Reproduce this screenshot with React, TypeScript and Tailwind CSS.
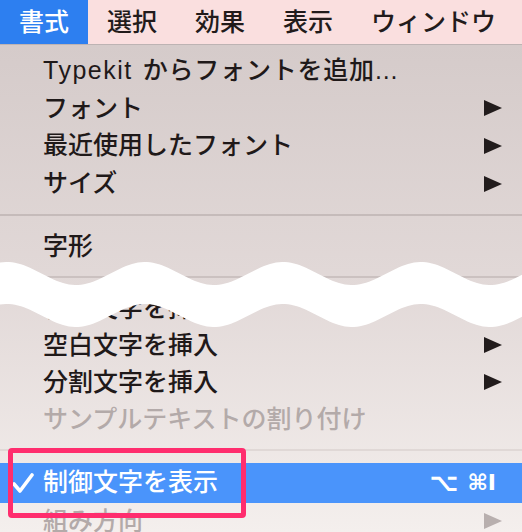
import React from 'react';

const font = { fontFamily: '"Liberation Sans", "Noto Sans CJK JP", sans-serif' };

function Arrow({ dim }: { dim?: boolean }) {
  return (
    <svg width="18" height="16" viewBox="0 0 18 16" className="shrink-0">
      <polygon points="0,0 18,8 0,16" fill={dim ? '#b8afae' : '#221c1c'} />
    </svg>
  );
}

function Row({
  label,
  arrow,
  dim,
  h = 'h-[37.6px]',
}: {
  label: React.ReactNode;
  arrow?: boolean;
  dim?: boolean;
  h?: string;
}) {
  return (
    <div className={`${h} flex items-center justify-between pl-[43px] pr-[20px]`}>
      <span className={`text-[25px] font-medium leading-none ${dim ? 'text-[#b3aaa9]' : 'text-[#1f1919]'}`}>{label}</span>
      {arrow && <Arrow dim={dim} />}
    </div>
  );
}

function Separator({ line }: { line: string }) {
  return (
    <div className="h-[25px] flex items-center">
      <div className={`h-[2px] w-full ${line}`} />
    </div>
  );
}

// white torn-paper wave laid over the menu
function Wave() {
  const top: string[] = [];
  const bottom: string[] = [];
  for (let x = 0; x <= 522; x += 3) {
    const y = 273.5 - 11.5 * Math.cos((2 * Math.PI * (x - 145)) / 138);
    top.push(`${x},${y.toFixed(2)}`);
    bottom.unshift(`${x},${(y + 42).toFixed(2)}`);
  }
  return (
    <svg className="absolute left-0 top-0 pointer-events-none" width="522" height="532" viewBox="0 0 522 532">
      <polygon points={[...top, ...bottom].join(' ')} fill="#ffffff" />
    </svg>
  );
}

export default function App() {
  const bar = ['選択', '効果', '表示', 'ウィンドウ'];
  return (
    <div className="relative w-[522px] h-[532px] overflow-hidden" style={font}>
      {/* menu bar */}
      <div className="h-[45px] flex bg-[#fadfdf] border-b border-[#bdb3b3]">
        <div className="px-[19px] flex items-center bg-[#2d7ff0] text-white text-[25px] font-medium leading-none">書式</div>
        {bar.map((b) => (
          <div key={b} className="px-[19px] flex items-center text-[#221b1b] text-[25px] font-medium leading-none">
            {b}
          </div>
        ))}
      </div>

      {/* dropdown */}
      <div className="h-[487px] pt-[7px] bg-linear-to-b from-[#d5cbca] via-[#e2d9d8] to-[#f4efed]">
        <Row
          label={
            <>
              <span className="tracking-[1.5px]">Typekit</span>
              <span className="ml-[10px] tracking-[0.8px]">からフォントを追加...</span>
            </>
          }
        />
        <Row label="フォント" arrow />
        <Row label="最近使用したフォント" arrow />
        <Row label="サイズ" arrow />
        <Separator line="bg-[#c5bbba]" />
        <Row label="字形" />
        <Separator line="bg-[#cbc1c0]" />
        <Row label="特殊文字を挿入" arrow h="h-[37px]" />
        <Row label="空白文字を挿入" arrow h="h-[37px]" />
        <Row label="分割文字を挿入" arrow h="h-[37px]" />
        <Row label="サンプルテキストの割り付け" dim h="h-[37px]" />
        <Separator line="bg-[#e0d8d6]" />
        <div className="h-[40px] flex items-center justify-between bg-[#4a94fb] pl-[12px] pr-[26px] text-white">
          <div className="flex items-center">
            <svg width="22" height="20" viewBox="0 0 22 20" className="mr-[9px]">
              <path d="M2 11 L8 18 L20 2" stroke="#ffffff" strokeWidth="3.6" fill="none" strokeLinecap="round" strokeLinejoin="round" />
            </svg>
            <span className="text-[25px] font-medium leading-none">制御文字を表示</span>
          </div>
          <span className="flex items-center gap-[9px] text-[25px] font-bold leading-none" style={{ fontFamily: '"DejaVu Sans", sans-serif' }}>
            <span>⌥</span>
            <span className="text-[22px]">⌘I</span>
          </span>
        </div>
        <Row label="組み方向" arrow dim h="h-[37px]" />
      </div>

      <Wave />

      {/* highlight box annotation */}
      <div className="absolute left-[8px] top-[448px] w-[238px] h-[70px] border-[5px] border-[#ff2d6e] rounded-[4px]" />
    </div>
  );
}
